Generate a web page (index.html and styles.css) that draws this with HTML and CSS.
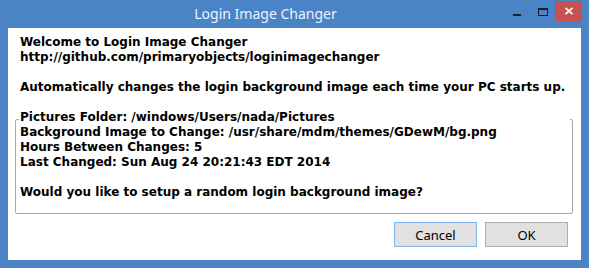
FILE: index.html
```html
<!DOCTYPE html>
<html lang="en">
<head>
    <meta charset="UTF-8">
    <title>Login Image Changer</title>
    <link rel="stylesheet" href="styles.css">
</head>
<body>
    <div class="window">
        <header class="titlebar">
            <span class="title">Login Image Changer</span>
            <div class="controls">
                <span class="ctl ctl-min"><i class="min-bar"></i></span>
                <span class="ctl ctl-max"><i class="max-box"></i></span>
                <span class="ctl ctl-close">
                    <svg width="10" height="8" viewBox="0 0 10 8">
                        <path d="M1.5 0.8 L8.5 7.2 M8.5 0.8 L1.5 7.2" stroke="#fff" stroke-width="1.8" fill="none"/>
                    </svg>
                </span>
            </div>
        </header>

        <main class="client">
            <div class="message">
                <p>Welcome to Login Image Changer</p>
                <p>http://github.com/primaryobjects/loginimagechanger</p>
                <p>&nbsp;</p>
                <p>Automatically changes the login background image each time your PC starts up.</p>
                <p>&nbsp;</p>
            </div>

            <div class="frame">
                <div class="frame-text">
                    <p>Pictures Folder: /windows/Users/nada/Pictures</p>
                    <p>Background Image to Change: /usr/share/mdm/themes/GDewM/bg.png</p>
                    <p>Hours Between Changes: 5</p>
                    <p>Last Changed: Sun Aug 24 20:21:43 EDT 2014</p>
                    <p>&nbsp;</p>
                    <p>Would you like to setup a random login background image?</p>
                </div>
            </div>

            <div class="buttons">
                <button class="btn btn-default">Cancel</button>
                <button class="btn">OK</button>
            </div>
        </main>
    </div>
</body>
</html>
```

FILE: styles.css
```css
/* Login Image Changer dialog */

html, body {
    margin: 0;
    padding: 0;
}

body {
    width: 589px;
    height: 268px;
    background-color: #4a84c7;
    overflow: hidden;
}

.window {
    display: flex;
    flex-direction: column;
    width: 589px;
    height: 268px;
}

/* Title bar */
.titlebar {
    display: flex;
    height: 28px;
    padding-left: 28px;
    padding-right: 7px;
}

.title {
    flex: 1;
    text-align: center;
    font-family: "Noto Sans", sans-serif;
    font-size: 14px;
    line-height: 28px;
    color: #eef3fb;
}

.controls {
    display: flex;
    align-items: flex-start;
}

.ctl {
    display: flex;
    justify-content: center;
    width: 26px;
    height: 20px;
    margin-top: 1px;
}

.ctl-close {
    width: 27px;
    background-color: #c75050;
    align-items: center;
}

.min-bar {
    display: block;
    width: 8px;
    height: 2px;
    margin-top: 13px;
    margin-left: 1px;
    background-color: #1e1e1e;
}

.max-box {
    display: block;
    width: 8px;
    height: 5px;
    margin-top: 7px;
    margin-left: 1px;
    border: 1px solid #1e1e1e;
    border-top-width: 2px;
}

/* Client area */
.client {
    flex: 1;
    display: flex;
    flex-direction: column;
    margin: 0 8px 8px 8px;
    padding-top: 7px;
    background-color: #fff;
    font-family: "DejaVu Sans", sans-serif;
    font-weight: bold;
    font-size: 12px;
    line-height: 15px;
    color: #000;
}

.client p {
    margin: 0;
    white-space: nowrap;
}

.message {
    margin-left: 12px;
}

.frame {
    margin: 9px 8px 0 7px;
    padding-bottom: 13px;
    border: 1px solid #a9a9a9;
    border-radius: 2px;
}

.frame-text {
    margin: -10px 2px 0 3px;
    padding-left: 1px;
    background-color: #fff;
}

/* Buttons */
.buttons {
    display: flex;
    justify-content: flex-end;
    gap: 8px;
    margin-top: 8px;
    margin-right: 13px;
}

.btn {
    box-sizing: border-box;
    width: 83px;
    height: 25px;
    padding: 0;
    border: 1px solid #adadad;
    background-color: #e1e1e1;
    font-family: "Noto Sans", sans-serif;
    font-size: 13px;
    color: #000;
}

.btn-default {
    border-color: #7eb4ea;
}
```
